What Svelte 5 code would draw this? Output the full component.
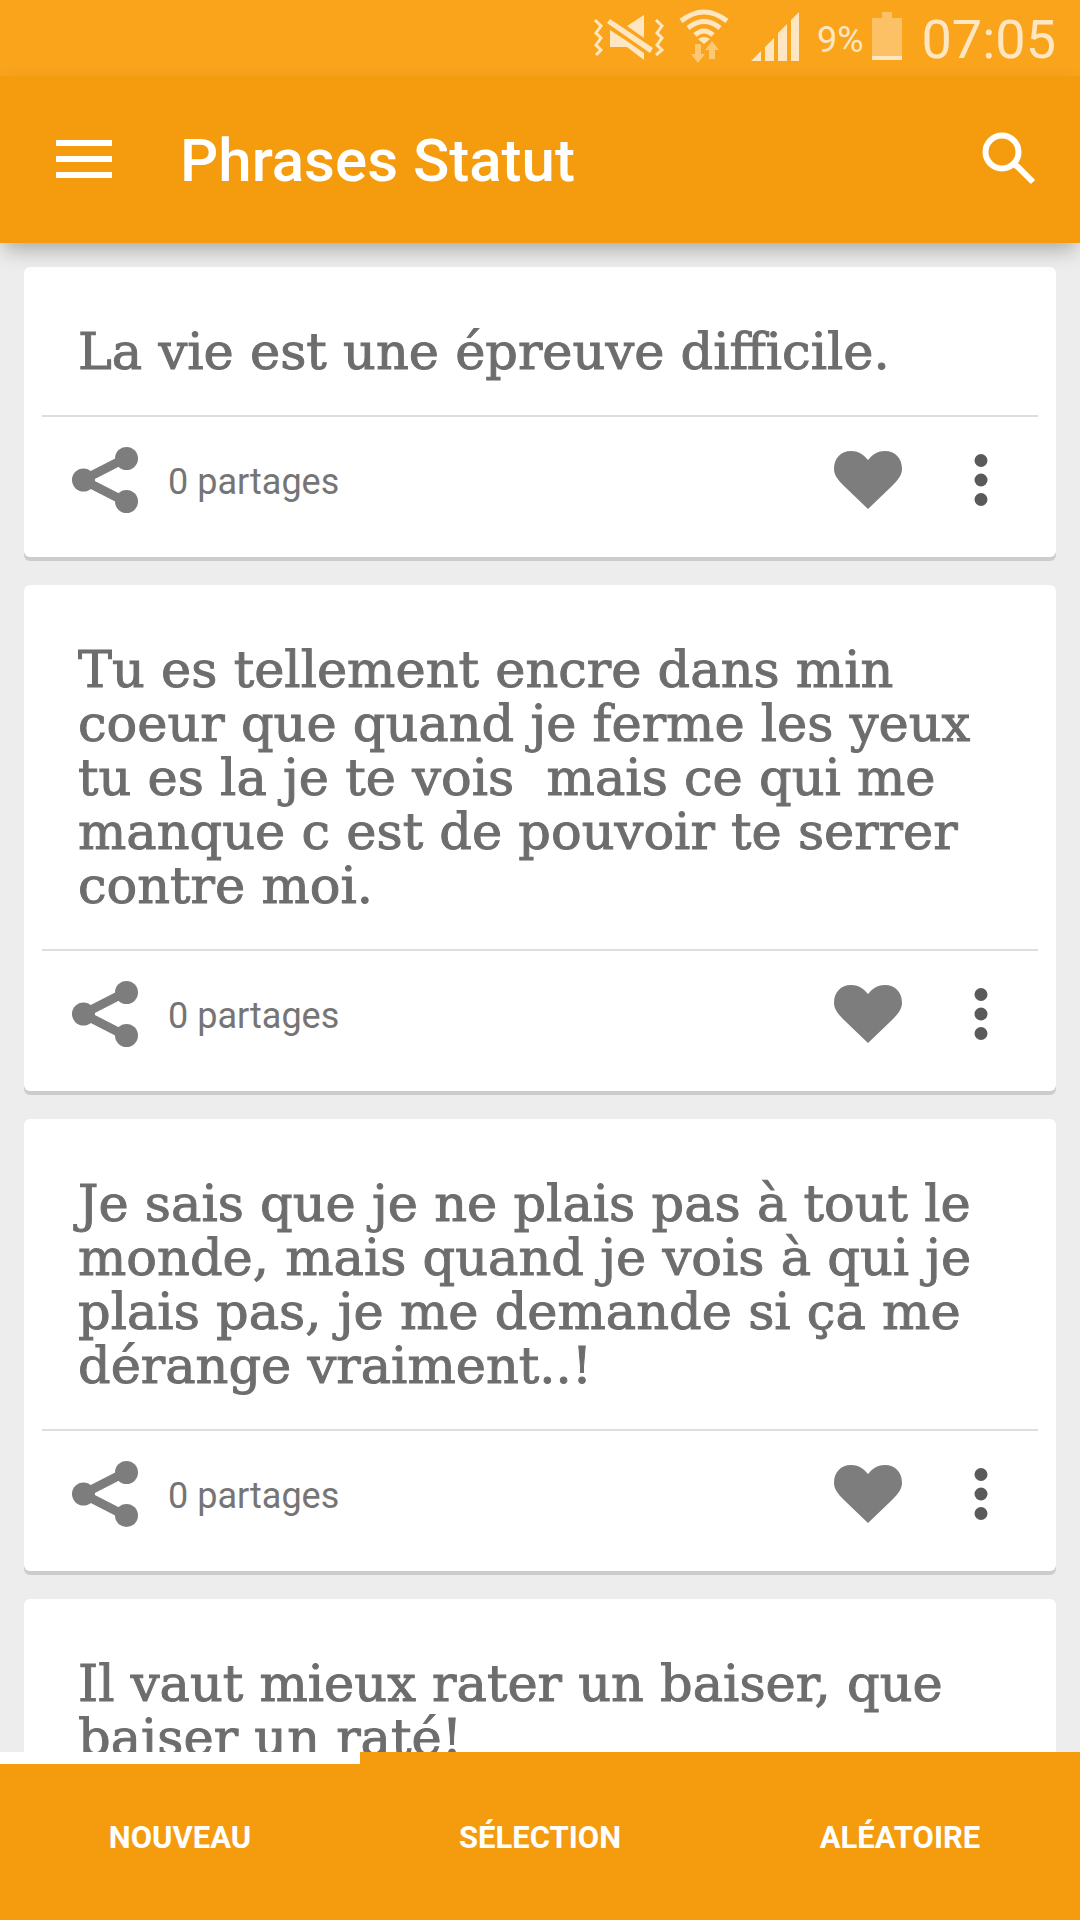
<script>
  const phrases = [
    { id: 1, text: 'La vie est une épreuve difficile.', shares: 0 },
    { id: 2, text: 'Tu es tellement encre dans min coeur que quand je ferme les yeux tu es la je te vois  mais ce qui me manque c est de pouvoir te serrer contre moi.', shares: 0 },
    { id: 3, text: 'Je sais que je ne plais pas à tout le monde, mais quand je vois à qui je plais pas, je me demande si ça me dérange vraiment..!', shares: 0 },
    { id: 4, text: 'Il vaut mieux rater un baiser, que baiser un raté!', shares: 0 }
  ];

  const tabs = ['Nouveau', 'Sélection', 'Aléatoire'];
  let active = 'Nouveau';
</script>

<div class="app">
  <div class="status">
    <svg class="muted" width="70" height="64" viewBox="0 0 70 64" aria-hidden="true">
      <g fill="none" stroke="#fee6c3" stroke-width="3">
        <path d="M1 20l6 6-5 7 5 5-5 7 5 5-5 5" />
        <path d="M62 20l6 6-5 7 5 5-5 7 5 5-6 5" />
      </g>
      <path fill="#fee6c3" d="M50 15v23L33 26zM16 30l17 11 17 12v7L33 47H16z" />
      <path fill="none" stroke="#faa41c" stroke-width="9" d="M14 22l43 30" />
      <path fill="#fee6c3" d="M16 19l43 29-3 5-43-30z" />
    </svg>
    <svg width="52" height="64" viewBox="0 0 52 64" aria-hidden="true">
      <g fill="none" stroke="#fee6c3" stroke-width="5">
        <path d="M3 21q23-18 46 0" />
        <path d="M10 28q16-13 32 0" />
        <path d="M17 35q9-8 18 0" />
      </g>
      <path fill="#fee6c3" d="M20 39q6-4 12 0l-6 5z" />
      <path fill="#fcc874" d="M17 44h6v10h4l-7 9-7-9h4zM31 59V50h-4l7-9 7 9h-4v9z" />
    </svg>
    <svg class="signal" width="48" height="49" viewBox="0 0 48 49" fill="#fee6c3" aria-hidden="true">
      <path d="M0 49l10-10v10zM14 35l9-9v23h-9zM27 21l9-9v37h-9zM40 8l8-8v49h-8z" />
    </svg>
    <span class="percent">9%</span>
    <svg class="battery" width="30" height="48" viewBox="0 0 30 48" aria-hidden="true">
      <path fill="#fcc165" d="M10 0h10v6h10v38H0V6h10z" />
      <path fill="#fee6c3" d="M0 44h30v4H0z" />
    </svg>
    <time>07:05</time>
  </div>

  <header>
    <button class="icon" aria-label="Menu">
      <svg width="56" height="38" viewBox="0 0 56 38" fill="#fff">
        <path d="M0 0h56v6H0zM0 16h56v6H0zM0 32h56v6H0z" />
      </svg>
    </button>
    <h1>Phrases Statut</h1>
    <button class="icon" aria-label="Rechercher">
      <svg width="54" height="54" viewBox="0 0 54 54" fill="none" stroke="#fff">
        <circle cx="20" cy="20" r="16.5" stroke-width="6" />
        <path d="M32 32l4 3L51 50" stroke-width="6" />
      </svg>
    </button>
  </header>

  <main>
    {#each phrases as phrase (phrase.id)}
      <article class="card">
        <p>{phrase.text}</p>
        <div class="actions">
          <button class="share">
            <svg width="66" height="66" viewBox="0 0 66 66" fill="#7d7d7d" aria-hidden="true">
              <path d="M54 11L11 33l43 22" fill="none" stroke="#7d7d7d" stroke-width="9" />
              <circle cx="11.5" cy="33" r="11.5" />
              <circle cx="54.5" cy="11.5" r="11.5" />
              <circle cx="54.5" cy="54.5" r="11.5" />
            </svg>
            <span>{phrase.shares} partages</span>
          </button>
          <button class="icon" aria-label="J'aime">
            <svg width="68" height="58" viewBox="0 0 68 58" fill="#7d7d7d">
              <path d="M34 58L10 35C4 29 0 24 0 18 0 7 7 0 17 0c7 0 12 3 17 9 5-6 10-9 17-9 10 0 17 7 17 18 0 6-4 11-10 17z" />
            </svg>
          </button>
          <button class="icon more" aria-label="Plus d'options">
            <svg width="14" height="52" viewBox="0 0 14 52" fill="#5a5a5a">
              <circle cx="7" cy="6.5" r="6.5" />
              <circle cx="7" cy="26" r="6.5" />
              <circle cx="7" cy="45.5" r="6.5" />
            </svg>
          </button>
        </div>
      </article>
    {/each}
  </main>

  <nav>
    {#each tabs as tab}
      <button class:active={active === tab} on:click={() => (active = tab)}>{tab}</button>
    {/each}
  </nav>
</div>

<style>
  :global(body) {
    margin: 0;
    background: #ededed;
  }

  .app {
    display: flex;
    flex-direction: column;
    height: 100vh;
    overflow: hidden;
    font-family: Roboto, sans-serif;
    background: #ededed;
  }

  button {
    padding: 0;
    border: 0;
    background: none;
    font: inherit;
    color: inherit;
    cursor: pointer;
  }

  svg {
    display: block;
    flex: none;
  }

  .status {
    display: flex;
    flex: none;
    justify-content: flex-end;
    height: 76px;
    padding-right: 24px;
    box-sizing: border-box;
    background: #faa41c;
    color: #fee6c3;
  }
  .muted {
    margin-right: 14px;
  }
  .signal {
    margin: 12px 18px 0 21px;
  }
  .percent {
    font-size: 36px;
    line-height: 80px;
  }
  .battery {
    margin: 12px 20px 0 8px;
  }
  time {
    font-size: 54px;
    line-height: 80px;
  }

  header {
    position: relative;
    z-index: 1;
    display: flex;
    flex: none;
    align-items: center;
    height: 167px;
    padding: 0 44px 2px 56px;
    box-sizing: border-box;
    background: #f59c0e;
    box-shadow: 0 10px 20px -4px rgba(0, 0, 0, 0.3);
  }
  h1 {
    flex: 1;
    margin: 0 0 0 68px;
    padding-top: 4px;
    font-size: 60px;
    font-weight: 500;
    line-height: 70px;
    color: #fff;
  }

  main {
    display: flex;
    flex: 1;
    flex-direction: column;
    gap: 28px;
    min-height: 0;
    padding: 24px 24px 0;
    overflow: hidden;
  }

  .card {
    flex: none;
    border-radius: 6px;
    background: #fff;
    box-shadow: 0 4px #ccc;
  }
  .card p {
    margin: 0;
    padding: 58px 56px 36px 54px;
    font-family: 'DejaVu Serif', serif;
    font-size: 51px;
    line-height: 54px;
    white-space: pre-wrap;
    color: #6d6d6d;
    -webkit-text-stroke: 1px #6d6d6d;
  }

  .actions {
    display: flex;
    align-items: center;
    height: 126px;
    margin: 0 18px;
    padding: 0 50px 14px 30px;
    border-top: 2px solid #dedede;
  }
  .share {
    display: flex;
    align-items: center;
    gap: 30px;
    margin-right: auto;
    font-size: 36px;
    line-height: 42px;
    color: #757575;
  }
  .share span {
    padding-top: 4px;
  }
  .more {
    margin-left: 72px;
  }

  nav {
    display: flex;
    flex: none;
    height: 168px;
    background: #f59c0e;
  }
  nav button {
    flex: 1;
    border-top: 12px solid transparent;
    border-bottom: 10px solid transparent;
    font-size: 31px;
    font-weight: 700;
    text-transform: uppercase;
    color: #fff;
  }
  nav .active {
    border-top-color: #fff;
  }
</style>
